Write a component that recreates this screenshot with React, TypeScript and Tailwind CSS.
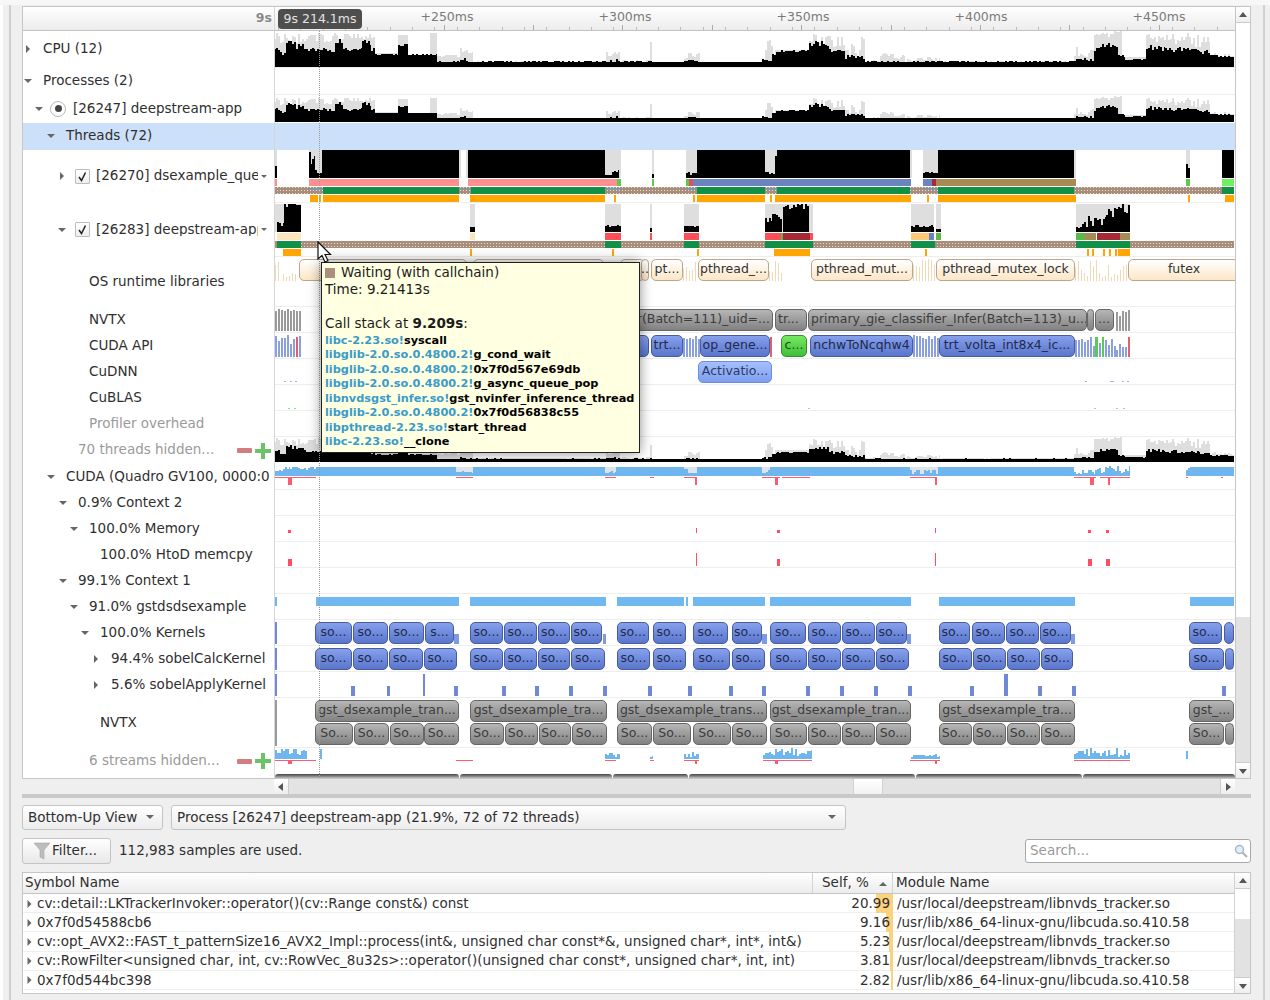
import { ReactNode } from 'react'

type Seg = [number, number, number, number]
type Block = [number, number, string?]

// tracks use page x coordinates, the track column starts at this x
const X0 = 275
const TRACK_W = 959

const noise = (i: number, seed: number) => {
  const v = Math.sin(i * 12.9898 + seed * 78.233) * 43758.5453
  return v - Math.floor(v)
}

const histPath = (segs: Seg[], H: number, scale = 1, seed = 1, bin = 2, barW = bin) => {
  let d = ''
  segs.forEach(([a, b, lo, hi], s) => {
    for (let x = a; x < b; x += bin) {
      const h = (lo + (hi - lo) * noise(x + s, seed)) * scale
      const w = Math.min(barW, b - x)
      d += `M${x} ${H}V${(H - h).toFixed(1)}H${x + w}V${H}Z`
    }
  })
  return d
}

const rectsPath = (list: [number, number][], y: number, h: number) =>
  list.map(([a, b]) => `M${a} ${y}H${b}V${y + h}H${a}Z`).join('')

const cpuBlack: Seg[] = [
  [274, 280, 17, 20], [280, 286, 12, 15], [286, 296, 22, 28], [296, 306, 17, 24], [306, 315, 15, 19],
  [315, 325, 16, 20], [325, 335, 15, 19], [335, 343, 23, 28], [343, 362, 15, 20], [362, 371, 22, 28],
  [371, 375, 14, 20], [375, 398, 12, 13], [398, 408, 21, 23], [408, 437, 12, 13], [437, 460, 5, 6],
  [460, 466, 6, 9], [466, 606, 5, 6], [606, 620, 5, 8], [620, 650, 5, 6], [650, 652, 5, 7], [652, 684, 5, 5],
  [684, 700, 5, 7], [700, 762, 5, 5], [762, 772, 5, 9], [772, 777, 10, 15], [777, 809, 15, 17],
  [809, 829, 20, 27], [829, 845, 14, 18], [845, 865, 8, 12], [865, 1074, 5, 6], [1074, 1094, 6, 9],
  [1094, 1100, 15, 20], [1100, 1118, 19, 24], [1118, 1125, 10, 12], [1125, 1146, 7, 9],
  [1146, 1165, 16, 22], [1165, 1200, 15, 20], [1200, 1210, 13, 18], [1210, 1234, 10, 12],
]
const cpuGray: Seg[] = [
  [274, 300, 22, 34], [300, 345, 25, 34], [345, 375, 28, 34], [375, 398, 14, 14], [398, 408, 32, 32],
  [408, 430, 12, 12], [430, 437, 34, 34], [437, 460, 10, 13], [460, 473, 12, 20], [473, 606, 5, 6],
  [606, 620, 10, 20], [620, 650, 5, 7], [650, 652, 25, 25], [652, 684, 5, 5], [684, 700, 8, 18],
  [700, 765, 5, 5], [765, 775, 10, 30], [775, 809, 17, 17], [809, 829, 20, 36], [829, 845, 16, 36],
  [845, 865, 10, 36], [865, 880, 5, 7], [880, 905, 6, 16], [905, 940, 5, 12], [940, 1074, 5, 6],
  [1074, 1094, 10, 20], [1094, 1122, 30, 36], [1122, 1146, 10, 10], [1146, 1175, 25, 34],
  [1175, 1210, 20, 34], [1210, 1234, 10, 14],
]

const Chart = ({ h, children }: { h: number; children: ReactNode }) => (
  <svg className="absolute left-0 top-0" width={TRACK_W} height={h} viewBox={`${X0} 0 ${TRACK_W} ${h}`} shapeRendering="crispEdges">
    {children}
  </svg>
)

const CpuChart = ({ h, scale }: { h: number; scale: number }) => (
  <Chart h={h}>
    <path d={histPath(cpuGray, h, scale, 3)} fill="#dedede" />
    <path d={histPath(cpuBlack, h, scale, 1)} fill="#000" />
  </Chart>
)

const blockStyles = {
  gray: 'bg-gradient-to-b from-[#b6b6b6] to-[#828282] border-[#666] text-[#3c3c3c]',
  blue: 'bg-gradient-to-b from-[#86a0ec] to-[#5a76cc] border-[#475c9c] text-[#1f2a4c]',
  light: 'bg-gradient-to-b from-[#a4bffa] to-[#7f9fee] border-[#6a8de0] text-[#2b3a66]',
  green: 'bg-gradient-to-b from-[#76e860] to-[#3fbf3a] border-[#3c8c32] text-[#1d4a1a]',
  cream: 'bg-gradient-to-b from-[#ffffff] to-[#fde6c6] border-[#b9a88c] text-[#333]',
}

const alignStyles = {
  center: ' justify-center',
  left: ' pl-[2px]',
  right: ' justify-end pr-[2px]',
}

const Blocks = ({ items, kind, top, h, align = 'center' }: { items: Block[]; kind: keyof typeof blockStyles; top: number; h: number; align?: keyof typeof alignStyles }) => (
  <>
    {items.map(([a, b, t], i) => (
      <div
        key={i}
        className={'absolute box-border flex items-center border rounded-[5px] overflow-hidden whitespace-nowrap text-[12.5px] pb-[2px] ' + blockStyles[kind] + alignStyles[align]}
        style={{ left: a - X0, width: b - a, top, height: h }}
      >
        {t}
      </div>
    ))}
  </>
)

const Arrow = ({ dir }: { dir?: 'down' | 'right' }) => (
  <span className="w-[8px] h-[8px] shrink-0 mr-[11px] flex items-center justify-center">
    {dir === 'down' && (
      <svg width="8" height="6" viewBox="0 0 8 6"><path d="M0 1H8L4 5Z" fill="#666" /></svg>
    )}
    {dir === 'right' && (
      <svg width="6" height="8" viewBox="0 0 6 8"><path d="M1 0V8L5 4Z" fill="#666" /></svg>
    )}
  </span>
)

const Row = ({ h, label, children, pl = 'pl-[1px]', dir, muted, hi, sep = true }: { h: number; label: ReactNode; children?: ReactNode; pl?: string; dir?: 'down' | 'right'; muted?: boolean; hi?: boolean; sep?: boolean }) => (
  <div className={'flex shrink-0 ' + (hi ? 'bg-[#cde0f9]' : '')} style={{ height: h }}>
    <div className={'relative w-[251px] shrink-0 flex items-center overflow-hidden whitespace-nowrap pb-[1px] ' + pl + (muted ? ' text-[#9a9a9a]' : '')}>
      <Arrow dir={dir} />
      {label}
    </div>
    <div className={'relative flex-1 border-l border-[#d6d6d6] ' + (sep && !hi ? 'shadow-[inset_0_-1px_0_#eeeeee]' : '')}>{children}</div>
  </div>
)

const Check = () => (
  <span className="w-[15px] h-[15px] shrink-0 -ml-[2px] mr-[6px] border border-[#bdbdbd] bg-gradient-to-b from-white to-[#eee] flex items-center justify-center rounded-[1px]">
    <svg width="11" height="11" viewBox="0 0 11 11"><path d="M2 6L4.5 9.5L8.5 1.5" stroke="#222" strokeWidth="1.5" fill="none" /></svg>
  </span>
)

const MiniDrop = () => (
  <svg className="absolute left-[238px] top-1/2 -mt-[2px]" width="6" height="4" viewBox="0 0 6 4"><path d="M0 0H6L3 3Z" fill="#666" /></svg>
)

const PlusMinus = () => (
  <span className="absolute left-[214px] top-1/2 -translate-y-1/2 flex items-center">
    <span className="w-[15px] h-[5px] bg-[#d27e80] rounded-[1px]" />
    <svg className="ml-[3px]" width="16" height="16" viewBox="0 0 16 16"><path d="M6 0H10V6H16V10H10V16H6V10H0V6H6Z" fill="#6cc36a" /></svg>
  </span>
)

const Hatch = ({ y, h, green }: { y: number; h: number; green: [number, number][] }) => (
  <>
    <rect x={X0} y={y} width={TRACK_W} height={h} fill="url(#hatch)" />
    <path d={rectsPath(green, y, h)} fill="#119147" />
  </>
)

const Bars = ({ list, y, h, fill }: { list: [number, number][]; y: number; h: number; fill: string }) => <path d={rectsPath(list, y, h)} fill={fill} />

const threadABlack: Seg[] = [
  [275, 277, 12, 12], [309, 312, 12, 26], [312, 315, 18, 26], [315, 319, 4, 10], [319, 322, 4, 5],
  [322, 459, 28, 28], [468, 605, 28, 28], [605, 612, 3, 3], [612, 619, 5, 8], [652, 654, 4, 4],
  [686, 690, 4, 6], [690, 697, 3, 5], [697, 765, 28, 28], [765, 769, 6, 6], [769, 775, 3, 6], [775, 777, 18, 22],
  [777, 910, 28, 28], [923, 938, 4, 6], [938, 1074, 28, 28], [1186, 1190, 5, 14], [1222, 1234, 28, 28],
]
const threadAGray: Seg[] = [
  [275, 277, 28, 28], [309, 322, 28, 28], [459, 461, 28, 28], [466, 468, 28, 28], [605, 621, 28, 28], [652, 654, 28, 28],
  [686, 697, 28, 28], [765, 777, 28, 28], [910, 912, 28, 28], [923, 938, 28, 28], [1074, 1076, 28, 28], [1186, 1190, 28, 28], [1222, 1224, 28, 28],
]
const threadBBlack: Seg[] = [
  [277, 284, 5, 12], [284, 288, 24, 28], [288, 301, 26, 28], [470, 475, 4, 5], [605, 621, 4, 7], [650, 652, 4, 4],
  [684, 699, 4, 6], [765, 772, 8, 14], [772, 782, 10, 24], [783, 809, 22, 28], [911, 934, 4, 7], [936, 941, 2, 3],
  [1076, 1084, 3, 8], [1084, 1095, 5, 16], [1095, 1106, 6, 18], [1106, 1116, 14, 26], [1116, 1130, 18, 28],
]
const threadBGray: Seg[] = [
  [275, 301, 28, 28], [470, 475, 28, 28], [605, 621, 28, 28], [650, 652, 28, 28], [684, 699, 28, 28], [765, 813, 28, 28],
  [911, 934, 28, 28], [936, 941, 28, 28], [1076, 1130, 28, 28],
]

const osStripes: Seg[] = [
  [275, 281, 4, 22], [283, 296, 2, 10], [683, 698, 10, 20], [769, 782, 6, 20], [913, 936, 12, 22], [1075, 1128, 4, 22],
]

const cudaBlue: Seg[] = [
  [275, 290, 5, 9], [290, 316, 6, 9], [456, 473, 3, 5], [605, 616, 3, 5], [684, 688, 7, 7], [688, 697, 2, 4],
  [762, 770, 2, 9], [910, 938, 2, 6], [1074, 1095, 2, 6], [1095, 1130, 3, 10], [1186, 1190, 6, 9],
]

const kernelsA: Block[] = [
  [315, 352, 'so...'], [353, 388, 'so...'], [389, 424, 'so...'], [425, 454, 's...'], [470, 503, 'so...'], [504, 537, 'so...'], [538, 570, 'so...'], [571, 602, 'so...'],
  [617, 649, 'so...'], [653, 686, 'so...'], [693, 728, 'so...'], [732, 762, 'so...'], [770, 806, 'so...'], [808, 841, 'so...'], [842, 875, 'so...'], [876, 907, 'so...'],
  [939, 970, 'so...'], [972, 1005, 'so...'], [1006, 1039, 'so...'], [1040, 1071, 'so...'], [1189, 1222, 'so...'], [1224, 1234],
]
const kernelsB: Block[] = [
  [315, 352, 'so...'], [353, 388, 'so...'], [389, 423, 'so...'], [424, 457, 'so...'], [470, 503, 'so...'], [504, 537, 'so...'], [538, 570, 'so...'], [571, 605, 'so...'],
  [617, 650, 'so...'], [653, 686, 'so...'], [693, 730, 'so...'], [732, 765, 'so...'], [770, 807, 'so...'], [808, 841, 'so...'], [842, 875, 'so...'], [876, 909, 'so...'],
  [939, 972, 'so...'], [973, 1006, 'so...'], [1007, 1040, 'so...'], [1041, 1073, 'so...'], [1189, 1224, 'so...'], [1225, 1234],
]
const nvtxTop: Block[] = [
  [315, 459, 'gst_dsexample_tran...'], [470, 607, 'gst_dsexample_tra...'], [617, 767, 'gst_dsexample_trans...'], [770, 911, 'gst_dsexample_tran...'], [939, 1075, 'gst_dsexample_tra...'], [1189, 1234, 'gst_...'],
]
const nvtxLow: Block[] = [
  [315, 353, 'So...'], [354, 389, 'So...'], [390, 424, 'So...'], [424, 459, 'So...'], [470, 504, 'So...'], [505, 538, 'So...'], [539, 571, 'So...'], [572, 607, 'So...'],
  [617, 652, 'So...'], [653, 691, 'So...'], [693, 731, 'So...'], [732, 767, 'So...'], [770, 807, 'So...'], [808, 841, 'So...'], [842, 875, 'So...'], [876, 911, 'So...'],
  [939, 972, 'So...'], [973, 1006, 'So...'], [1007, 1040, 'So...'], [1041, 1075, 'So...'], [1189, 1224, 'So...'], [1225, 1234],
]

const applyBars: [number, number][] = [
  [351, 355], [387, 390], [454, 458], [502, 506], [535, 539], [569, 573], [603, 607], [648, 652], [688, 692], [729, 733], [762, 766], [806, 810], [840, 844], [874, 878], [908, 912], [970, 974], [1038, 1042], [1072, 1076], [1222, 1226],
]

const callStack: [string, string][] = [
  ['libc-2.23.so!', 'syscall'],
  ['libglib-2.0.so.0.4800.2!', 'g_cond_wait'],
  ['libglib-2.0.so.0.4800.2!', '0x7f0d567e69db'],
  ['libglib-2.0.so.0.4800.2!', 'g_async_queue_pop'],
  ['libnvdsgst_infer.so!', 'gst_nvinfer_inference_thread'],
  ['libglib-2.0.so.0.4800.2!', '0x7f0d56838c55'],
  ['libpthread-2.23.so!', 'start_thread'],
  ['libc-2.23.so!', '__clone'],
]

const tableRows: [string, string, number, string][] = [
  ['cv::detail::LKTrackerInvoker::operator()(cv::Range const&) const', '20.99', 17, '/usr/local/deepstream/libnvds_tracker.so'],
  ['0x7f0d54588cb6', '9.16', 7, '/usr/lib/x86_64-linux-gnu/libcuda.so.410.58'],
  ['cv::opt_AVX2::FAST_t_patternSize16_AVX2_Impl::process(int&, unsigned char const*&, unsigned char*, int*, int&)', '5.23', 4, '/usr/local/deepstream/libnvds_tracker.so'],
  ['cv::RowFilter<unsigned char, int, cv::RowVec_8u32s>::operator()(unsigned char const*, unsigned char*, int, int)', '3.81', 3, '/usr/local/deepstream/libnvds_tracker.so'],
  ['0x7f0d544bc398', '2.82', 2, '/usr/lib/x86_64-linux-gnu/libcuda.so.410.58'],
]

const ScrollArrow = ({ dir }: { dir: 'up' | 'down' | 'left' | 'right' }) => {
  const d = { up: 'M1 7H9L5 2Z', down: 'M1 3H9L5 8Z', left: 'M7 1V9L2 5Z', right: 'M3 1V9L8 5Z' }[dir]
  return (
    <svg width="10" height="10" viewBox="0 0 10 10"><path d={d} fill="#555" /></svg>
  )
}

const Ticks = () => {
  const minor: number[] = []
  for (let x = 278; x < 1234; x += 22.35) minor.push(x)
  const major: number[] = []
  for (let x = 443.5; x < 1234; x += 89.4) major.push(x)
  return (
    <svg className="absolute left-0 bottom-0" width={TRACK_W} height="6" viewBox={`${X0} 0 ${TRACK_W} 6`} shapeRendering="crispEdges">
      {minor.map((x) => <rect key={x} x={x} y="3" width="1" height="3" fill="#bbb" />)}
      {major.map((x) => <rect key={x} x={x} y="1" width="1" height="5" fill="#aaa" />)}
    </svg>
  )
}

const Combo = ({ className, children }: { className: string; children: ReactNode }) => (
  <div className={'h-[25px] box-border flex items-center justify-between border border-[#c4c4c4] rounded-[3px] bg-gradient-to-b from-white to-[#ececec] pl-[5px] ' + className}>
    <span>{children}</span>
    <svg width="8" height="5" viewBox="0 0 8 5"><path d="M0 0H8L4 4Z" fill="#666" /></svg>
  </div>
)

export default function App() {
  return (
    <div className="relative w-[1270px] h-[1000px] overflow-hidden bg-[#efefef] font-['DejaVu_Sans',sans-serif] text-[13.5px] leading-none text-[#2f2f2f]">
      {/* window edges */}
      <div className="absolute left-0 top-0 h-full w-[3px] bg-white" />
      <div className="absolute left-[9px] top-0 h-full w-[2px] bg-[#cfcfcf]" />
      <div className="absolute left-[1263px] top-0 h-full w-[2px] bg-[#d2d2d2]" />
      <div className="absolute left-0 top-0 h-[5px] w-full bg-[#f7f7f7]" />

      <div className="absolute left-[22px] top-[6px] w-[1229px]">
        {/* timeline + vertical scrollbar */}
        <div className="flex h-[773px]">
          <div className="relative w-[1213px] flex flex-col border border-[#c6c6c6] border-r-0 overflow-hidden bg-white">
            <div className="flex h-[24px] shrink-0 border-b border-[#c4c4c4] bg-gradient-to-b from-white to-[#ececec]">
              <div className="w-[251px] shrink-0 flex items-center justify-end pr-[2px] font-bold text-[#8a8a8a] text-[12.5px]">9s</div>
              <div className="relative flex-1 border-l border-[#d6d6d6]">
                <Ticks />
                <div className="absolute left-[3px] top-[2px] h-[20px] w-[84px] box-border rounded-[4px] bg-[#4e4e4e] text-[#e4e4e4] flex items-center justify-center text-[12.5px]">9s 214.1ms</div>
                {[
                  ['+250ms', 172], ['+300ms', 350], ['+350ms', 528], ['+400ms', 706], ['+450ms', 884],
                ].map(([t, c]) => (
                  <span key={t} className="absolute top-[4px] -translate-x-1/2 text-[12.5px] text-[#7a7a7a]" style={{ left: c as number }}>{t}</span>
                ))}
              </div>
            </div>

            <Row h={37} pl="pl-[1px]" dir="right" label="CPU (12)">
              <CpuChart h={36} scale={1} />
            </Row>
            <Row h={27} dir="down" label="Processes (2)" />
            <Row h={28} pl="pl-[12px]" dir="down" sep={false} label={
              <>
                <span className="-ml-[4px] mr-[7px] w-[16px] h-[16px] rounded-full border border-[#b8b8b8] bg-white flex items-center justify-center"><span className="w-[7px] h-[7px] rounded-full bg-[#444]" /></span>
                [26247] deepstream-app
              </>
            }>
              <CpuChart h={27} scale={0.72} />
            </Row>
            <Row h={27} hi pl="pl-[24px]" dir="down" label="Threads (72)" />
            <Row h={53} pl="pl-[35px]" dir="right" label={
              <>
                <Check />
                <span className="w-[162px] overflow-hidden">[26270] dsexample_queue</span>
                <MiniDrop />
              </>
            }>
              <Chart h={53}>
                <path d={histPath(threadAGray, 27.5, 1, 4)} fill="#dedede" />
                <path d={histPath(threadABlack, 27.5, 1, 5)} fill="#000" />
                <Bars list={[[275, 277], [309, 459], [468, 621]]} y={29} h={7} fill="#ff8f8f" />
                <Bars list={[[617, 621], [652, 654], [686, 689], [1186, 1190]]} y={29} h={7} fill="#5fc850" />
                <Bars list={[[689, 693]]} y={29} h={7} fill="#e0505a" />
                <Bars list={[[693, 911], [923, 932]]} y={29} h={7} fill="#6b84c0" />
                <Bars list={[[932, 936]]} y={29} h={7} fill="#a52a35" />
                <Bars list={[[936, 1076]]} y={29} h={7} fill="#a88a52" />
                <Bars list={[[1222, 1234]]} y={29} h={7} fill="#70f060" />
                <Hatch y={37} h={7} green={[[323, 459], [471, 605], [697, 765], [777, 910], [938, 1074], [1222, 1234]]} />
                <Bars list={[[309, 323], [459, 462], [466, 471], [605, 621], [686, 697], [765, 777], [910, 912], [923, 938]]} y={38} h={1} fill="#5b9fd6" />
                <Bars list={[[310, 318], [319, 321], [323, 459], [470, 605], [614, 616], [693, 695], [697, 765], [770, 772], [775, 911], [927, 929], [938, 1076], [1188, 1190], [1225, 1234]]} y={45} h={7} fill="#ffa600" />
              </Chart>
            </Row>
            <Row h={54} pl="pl-[35px]" dir="down" label={
              <>
                <Check />
                <span className="w-[162px] overflow-hidden">[26283] deepstream-app</span>
                <MiniDrop />
              </>
            }>
              <Chart h={54}>
                <path d={histPath(threadBGray, 28.5, 1, 6)} fill="#dedede" />
                <path d={histPath(threadBBlack, 28.5, 1, 7)} fill="#000" />
                <Bars list={[[277, 301], [470, 475]]} y={30} h={7} fill="#fde6bd" />
                <Bars list={[[605, 621], [650, 652], [684, 699], [765, 781], [810, 813]]} y={30} h={7} fill="#ff4d5a" />
                <Bars list={[[781, 783], [936, 941], [1076, 1085]]} y={30} h={7} fill="#5cb848" />
                <Bars list={[[783, 810], [1097, 1120]]} y={30} h={7} fill="#a52a35" />
                <Bars list={[[911, 929]]} y={30} h={7} fill="#fdc878" />
                <Bars list={[[929, 934]]} y={30} h={7} fill="#6b84c0" />
                <Bars list={[[1085, 1096], [1120, 1130]]} y={30} h={7} fill="#a88a52" />
                <Hatch y={38} h={7} green={[[277, 301], [605, 621], [684, 699], [765, 813], [911, 935], [1076, 1130]]} />
                <Bars list={[[283, 301], [470, 472], [612, 614], [697, 699], [774, 810], [925, 927], [1087, 1089], [1092, 1094], [1103, 1105], [1109, 1111], [1115, 1117], [1118, 1130]]} y={46} h={7} fill="#ffa600" />
              </Chart>
            </Row>
            <Row h={50} pl="pl-[47px]" label="OS runtime libraries">
              <Chart h={50}>
                <path d={histPath(osStripes, 24, 1, 2, 3, 1)} fill="#f2d9b6" />
              </Chart>
              <Blocks kind="cream" top={2} h={22} items={[
                [299, 467], [473, 604], [620, 645], [641, 649, '..'], [651, 683, 'pt...'], [698, 769, 'pthread_...'], [811, 913, 'pthread_mut...'], [936, 1075, 'pthread_mutex_lock'], [1128, 1240, 'futex'],
              ]} />
            </Row>
            <Row h={26} pl="pl-[47px]" label="NVTX">
              <Chart h={26}>
                <path d={histPath([[275, 301, 18, 22], [1116, 1130, 14, 22]], 24, 1, 9, 3, 2)} fill="#9a9a9a" />
              </Chart>
              <Blocks kind="gray" top={2} h={22} align="right" items={[[620, 773, 'Infer(Batch=111)_uid=...']]} />
              <Blocks kind="gray" top={2} h={22} align="left" items={[
                [775, 807, 'tr...'], [808, 1087, 'primary_gie_classifier_Infer(Batch=113)_u...'], [1087, 1094], [1095, 1114, '...'],
              ]} />
            </Row>
            <Row h={26} pl="pl-[47px]" label="CUDA API">
              <Chart h={26}>
                <path d={histPath([[275, 301, 8, 22], [683, 700, 18, 22], [913, 939, 18, 22], [1075, 1116, 10, 22], [1116, 1130, 6, 16]], 24, 1, 8, 3, 2)} fill="#8ba0df" />
                <Bars list={[[296, 298], [770, 772], [1128, 1130]]} y={4} h={20} fill="#e0606c" />
                <Bars list={[[1095, 1098], [1102, 1104]]} y={4} h={20} fill="#58cc50" />
              </Chart>
              <Blocks kind="blue" top={2} h={22} items={[
                [620, 649], [651, 683, 'trt...'], [700, 770, 'op_gene...'], [810, 913, 'nchwToNcqhw4'], [939, 1075, 'trt_volta_int8x4_ic...'],
              ]} />
              <Blocks kind="green" top={2} h={22} items={[[781, 807, 'c...']]} />
            </Row>
            <Row h={26} pl="pl-[47px]" label="CuDNN">
              <Chart h={26}>
                <Bars list={[[284, 286], [290, 292], [295, 297], [1085, 1087], [1110, 1114], [1122, 1124], [1127, 1129]]} y={22} h={1} fill="#9fb2e8" />
              </Chart>
              <Blocks kind="light" top={2} h={22} items={[[698, 772, 'Activatio...']]} />
            </Row>
            <Row h={26} pl="pl-[47px]" label="CuBLAS">
              <Chart h={26}>
                <Bars list={[[288, 290], [294, 296], [808, 810], [1094, 1096], [1116, 1118], [1123, 1125]]} y={23} h={1} fill="#8fe088" />
              </Chart>
            </Row>
            <Row h={26} pl="pl-[47px]" muted label="Profiler overhead" />
            <Row h={27} pl="pl-[36px]" muted sep={false} label={<>70 threads hidden...<PlusMinus /></>}>
              <Chart h={27}>
                <path d={histPath(cpuGray, 25, 0.7, 3)} fill="#dedede" />
                <path d={histPath(cpuBlack, 25, 0.6, 2)} fill="#000" />
                <rect x={X0} y={23} width={TRACK_W} height={2} fill="#000" />
              </Chart>
            </Row>
            <Row h={26} pl="pl-[24px]" dir="down" label={<span className="w-[204px] overflow-hidden">CUDA (Quadro GV100, 0000:01:00.0)</span>}>
              <Chart h={26}>
                <path d={rectsPath([[316, 456], [473, 605], [616, 684], [697, 762], [770, 910], [938, 1074], [1190, 1234]], 3, 9)} fill="#6fb6ee" />
                <Bars list={[[456, 473], [605, 616], [684, 697], [762, 770], [910, 938]]} y={3} h={7} fill="#dfe4e8" />
                <path d={histPath(cudaBlue, 12, 1, 11)} fill="#6fb6ee" />
                <Bars list={[[275, 290], [292, 316], [456, 473], [605, 616], [650, 654], [684, 697], [762, 780], [782, 810], [910, 935], [1074, 1096], [1100, 1130], [1186, 1188], [1221, 1223]]} y={13} h={1} fill="#ff5a6e" />
                <Bars list={[[288, 292], [695, 697], [775, 778], [935, 937], [1090, 1094], [1108, 1110]]} y={13} h={8} fill="#ff5a6e" />
              </Chart>
            </Row>
            <Row h={26} pl="pl-[36px]" dir="down" label="0.9% Context 2" />
            <Row h={26} pl="pl-[47px]" dir="down" label="100.0% Memory">
              <Chart h={26}>
                <Bars list={[[288, 291], [777, 780], [1088, 1091], [1106, 1109]]} y={14} h={3} fill="#ff4d63" />
                <Bars list={[[696, 697], [935, 936]]} y={12} h={5} fill="#ff4d63" />
              </Chart>
            </Row>
            <Row h={26} pl="pl-[58px]" label="100.0% HtoD memcpy">
              <Chart h={26}>
                <Bars list={[[288, 292], [777, 780], [1088, 1092], [1106, 1110]]} y={17} h={7} fill="#ff4d63" />
                <Bars list={[[696, 697], [935, 936]]} y={11} h={13} fill="#ff4d63" />
              </Chart>
            </Row>
            <Row h={26} pl="pl-[36px]" dir="down" label="99.1% Context 1" />
            <Row h={26} pl="pl-[47px]" dir="down" label="91.0% gstdsdsexample">
              <Chart h={26}>
                <Bars list={[[275, 277], [316, 459], [470, 606], [617, 684], [686, 688], [693, 765], [770, 911], [939, 1075], [1190, 1234]]} y={3} h={9} fill="#70b8f0" />
              </Chart>
            </Row>
            <Row h={26} pl="pl-[58px]" dir="down" label="100.0% Kernels">
              <Chart h={26}>
                <Bars list={[[275, 277]]} y={2} h={22} fill="#7088d8" />
                <Bars list={[[454, 459], [603, 606], [762, 767], [907, 911], [1071, 1075]]} y={14} h={10} fill="#7f9ae4" />
              </Chart>
              <Blocks kind="blue" top={2} h={22} items={kernelsA} />
            </Row>
            <Row h={26} pl="pl-[69px]" dir="right" label="94.4% sobelCalcKernel">
              <Chart h={26}>
                <Bars list={[[275, 277]]} y={2} h={22} fill="#7088d8" />
              </Chart>
              <Blocks kind="blue" top={2} h={22} items={kernelsB} />
            </Row>
            <Row h={26} pl="pl-[69px]" dir="right" label="5.6% sobelApplyKernel">
              <Chart h={26}>
                <Bars list={applyBars} y={14} h={10} fill="#7088d8" />
                <Bars list={[[275, 277], [423, 425], [1004, 1008]]} y={2} h={22} fill="#7088d8" />
              </Chart>
            </Row>
            <Row h={50} pl="pl-[58px]" label="NVTX">
              <Chart h={50}>
                <Bars list={[[275, 277]]} y={2} h={46} fill="#9a9a9a" />
              </Chart>
              <Blocks kind="gray" top={2} h={22} items={nvtxTop} />
              <Blocks kind="gray" top={25} h={22} items={nvtxLow} />
            </Row>
            <Row h={26} pl="pl-[47px]" muted sep={false} label={<>6 streams hidden...<PlusMinus /></>}>
              <Chart h={26}>
                <path d={histPath([[275, 307, 4, 10], [320, 322, 3, 10], [605, 620, 2, 7], [650, 653, 2, 5], [684, 699, 2, 7], [763, 812, 3, 11], [911, 940, 2, 5], [1074, 1130, 2, 11], [1186, 1188, 4, 10]], 11, 1, 13)} fill="#6fb6ee" />
                <Bars list={[[275, 316], [456, 473], [605, 616], [650, 654], [684, 699], [763, 812], [910, 940], [1074, 1130]]} y={12} h={1} fill="#ff5a6e" />
                <Bars list={[[288, 292], [695, 697], [775, 778], [935, 937]]} y={12} h={4} fill="#ff5a6e" />
              </Chart>
            </Row>
            <div className="flex h-[5px] shrink-0">
              <div className="w-[251px] shrink-0" />
              <div className="flex-1 flex gap-[1px] border-l border-[#d6d6d6]">
                <div className="w-[184px] rounded-t-[3px] bg-gradient-to-b from-[#444] to-[#ddd]" />
                <div className="w-[152px] rounded-t-[3px] bg-gradient-to-b from-[#444] to-[#ddd]" />
                <div className="w-[75px] rounded-t-[3px] bg-gradient-to-b from-[#444] to-[#ddd]" />
                <div className="w-[226px] rounded-t-[3px] bg-gradient-to-b from-[#444] to-[#ddd]" />
                <div className="w-[166px] rounded-t-[3px] bg-gradient-to-b from-[#444] to-[#ddd]" />
                <div className="flex-1 rounded-t-[3px] bg-gradient-to-b from-[#444] to-[#ddd]" />
              </div>
            </div>

            {/* cursor line, tooltip and pointer float over the tracks */}
            <div className="absolute left-[296px] top-[24px] bottom-0 border-l border-dotted border-[#9a9a9a]" />
            <div className="absolute left-[298px] top-[255px] w-[319px] h-[191px] box-border border border-[#222] bg-[#ffffe1] shadow-[0_0_12px_rgba(0,0,0,0.45)] pl-[3px] pt-[1px] text-[13.5px] text-[#1c1c1c]">
              <div className="flex items-center h-[17px]"><span className="w-[10px] h-[10px] bg-[#ac8f7c] mr-[6px]" />Waiting (with callchain)</div>
              <div className="flex items-center h-[17px]">Time: 9.21413s</div>
              <div className="h-[17px]" />
              <div className="flex items-center h-[17px]"><span>Call stack at <b>9.209s</b>:</span></div>
              <div className="mt-[1px] text-[11.3px] font-bold">
                {callStack.map(([m, s]) => (
                  <div key={s} className="h-[14.5px] flex items-center whitespace-nowrap"><span className="text-[#3a9bc9]">{m}</span><span className="text-black">{s}</span></div>
                ))}
              </div>
            </div>
            <svg className="absolute left-[294px] top-[234px]" width="16" height="24" viewBox="0 0 16 24">
              <path d="M1 1V18L5 14.5L8 21L11 19.8L8 13.5H13.5Z" fill="#fff" stroke="#111" strokeWidth="1.2" />
            </svg>
          </div>

          {/* vertical scrollbar */}
          <div className="w-[16px] shrink-0 flex flex-col border border-[#c6c6c6]">
            <div className="h-[16px] flex items-center justify-center bg-gradient-to-b from-white to-[#eee] border-b border-[#ccc]"><ScrollArrow dir="up" /></div>
            <div className="h-[594px] bg-white" />
            <div className="flex-1 bg-[#e2e2e2]" />
            <div className="h-[16px] flex items-center justify-center bg-gradient-to-b from-white to-[#eee] border-t border-[#ccc]"><ScrollArrow dir="down" /></div>
          </div>
        </div>

        {/* horizontal scrollbar */}
        <div className="flex h-[15px] ml-[252px] w-[961px] bg-[#e3e3e3]">
          <div className="w-[15px] flex items-center justify-center bg-gradient-to-b from-white to-[#eee] border-r border-[#ccc]"><ScrollArrow dir="left" /></div>
          <div className="w-[564px]" />
          <div className="w-[30px] bg-gradient-to-b from-white to-[#f2f2f2] border-x border-[#d2d2d2]" />
          <div className="flex-1" />
          <div className="w-[15px] flex items-center justify-center bg-gradient-to-b from-white to-[#eee] border-l border-[#ccc]"><ScrollArrow dir="right" /></div>
        </div>
        <div className="h-[4px] bg-[#c9c9c9]" />

        {/* view selectors */}
        <div className="flex gap-[8px] mt-[7px]">
          <Combo className="w-[141px] pr-[8px]">Bottom-Up View</Combo>
          <Combo className="w-[675px] pr-[9px]">Process [26247] deepstream-app (21.9%, 72 of 72 threads)</Combo>
        </div>

        <div className="flex items-center mt-[8px] h-[26px]">
          <div className="w-[89px] h-[26px] box-border flex items-center border border-[#c4c4c4] rounded-[3px] bg-gradient-to-b from-white to-[#e8e8e8] pl-[11px]">
            <svg className="mr-[2px]" width="16" height="18" viewBox="0 0 16 18"><path d="M0 1H16L10 8V17L6 15V8Z" fill="#bdbdbd" stroke="#9a9a9a" strokeWidth="0.5" /></svg>
            Filter...
          </div>
          <span className="ml-[8px]">112,983 samples are used.</span>
          <div className="ml-auto w-[226px] h-[24px] box-border flex items-center justify-between border border-[#a8a8a8] rounded-[3px] bg-white pl-[4px] pr-[2px] text-[#9a9a9a]">
            Search...
            <svg width="14" height="14" viewBox="0 0 14 14"><circle cx="5.5" cy="5.5" r="4" fill="#e4eef8" stroke="#a8b8c8" strokeWidth="1.5" /><path d="M8.5 8.5L13 13" stroke="#b4b4b4" strokeWidth="2.2" /></svg>
          </div>
        </div>

        {/* symbol table */}
        <div className="flex mt-[8px] h-[122px] border border-[#c6c6c6] bg-white">
          <div className="flex-1 flex flex-col min-w-0">
            <div className="flex h-[21px] shrink-0 items-center border-b border-[#c4c4c4] bg-gradient-to-b from-white to-[#ececec]">
              <div className="w-[790px] pl-[2px] border-r border-[#d2d2d2] h-full flex items-center">Symbol Name</div>
              <div className="w-[80px] h-full flex items-center border-r border-[#d2d2d2] pl-[9px]">
                Self, %
                <svg className="ml-[10px]" width="8" height="5" viewBox="0 0 8 5"><path d="M0 5H8L4 1Z" fill="#666" /></svg>
              </div>
              <div className="pl-[3px]">Module Name</div>
            </div>
            {tableRows.map(([name, self, w, mod]) => (
              <div key={name} className="flex h-[19.2px] shrink-0 items-center shadow-[inset_0_-1px_0_#efefef]">
                <div className="w-[790px] flex items-center whitespace-nowrap pl-[4px]">
                  <svg className="mr-[5px] shrink-0" width="5" height="8" viewBox="0 0 5 8"><path d="M0.5 0V8L4.5 4Z" fill="#666" /></svg>
                  {name}
                </div>
                <div className="relative w-[80px] h-full flex items-center justify-end pr-[3px]">
                  <span className="absolute right-0 top-0 h-full bg-[#fdd27d]" style={{ width: w }} />
                  <span className="relative">{self}</span>
                </div>
                <div className="pl-[4px] whitespace-nowrap">{mod}</div>
              </div>
            ))}
          </div>
          <div className="w-[16px] shrink-0 flex flex-col border-l border-[#d2d2d2]">
            <div className="h-[16px] flex items-center justify-center bg-gradient-to-b from-white to-[#eee] border-b border-[#ccc]"><ScrollArrow dir="up" /></div>
            <div className="h-[30px] bg-white" />
            <div className="flex-1 bg-[#e2e2e2]" />
            <div className="h-[16px] flex items-center justify-center bg-gradient-to-b from-white to-[#eee] border-t border-[#ccc]"><ScrollArrow dir="down" /></div>
          </div>
        </div>
      </div>

      {/* shared pattern for the waiting state bars */}
      <svg width="0" height="0" className="absolute">
        <defs>
          <pattern id="hatch" width="3" height="3" patternUnits="userSpaceOnUse">
            <rect width="3" height="3" fill="#a88e7a" />
            <rect x="1" y="1" width="1" height="1" fill="#e6dcd2" />
          </pattern>
        </defs>
      </svg>
    </div>
  )
}
